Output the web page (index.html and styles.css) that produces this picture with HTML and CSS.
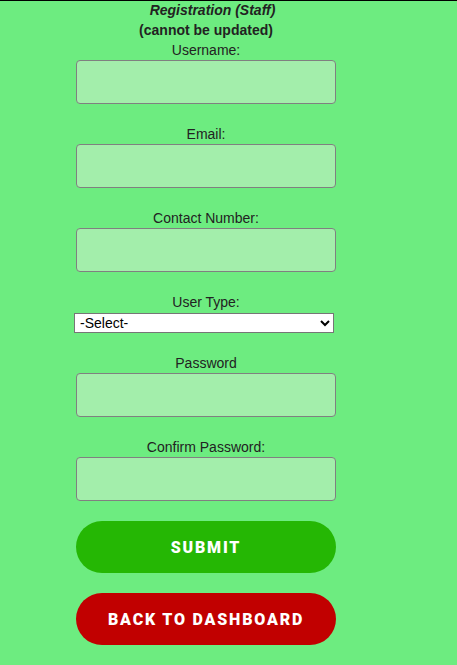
FILE: index.html
```html
<!DOCTYPE html>
<html>
<head>
<meta charset="utf-8">
<link rel="stylesheet" href="styles.css">
</head>
<body>
<div class="page">
  <form class="form">
    <div class="title">Registration (Staff)</div>
    <div class="subtitle">(cannot be updated)</div>
    <label class="label">Username:</label>
    <input class="field" type="text">
    <label class="label">Email:</label>
    <input class="field" type="text">
    <label class="label">Contact Number:</label>
    <input class="field" type="text">
    <label class="label">User Type:</label>
    <select class="select"><option>-Select-</option></select>
    <label class="label">Password</label>
    <input class="field" type="password">
    <label class="label">Confirm Password:</label>
    <input class="field" type="password">
    <button type="button" class="btn btn-submit">SUBMIT</button>
    <button type="button" class="btn btn-back">BACK TO DASHBOARD</button>
  </form>
</div>
</body>
</html>
```
FILE: styles.css
```css
html, body {
  margin: 0;
  padding: 0;
  background: #6dec80;
}
body {
  border-top: 1px solid #000;
  font-family: "Liberation Sans", Arial, sans-serif;
  font-size: 14px;
  color: #222;
  height: 664px;
  overflow: hidden;
}
.page {
  width: 412px;
}
.form {
  display: flex;
  flex-direction: column;
  align-items: center;
  text-align: center;
}
.title {
  font-weight: bold;
  font-style: italic;
  line-height: 19px;
  height: 19px;
  padding-left: 13px;
}
.subtitle {
  font-weight: bold;
  line-height: 20px;
}
.label {
  display: block;
  line-height: 20px;
}
.field {
  box-sizing: border-box;
  width: 260px;
  height: 44px;
  margin: 0 0 20px 0;
  background: #a3eeab;
  border: 1px solid #808080;
  border-radius: 4px;
}
.select {
  box-sizing: border-box;
  align-self: flex-start;
  margin: 1px 0 20px 74px;
  width: 260px;
  height: 20px;
  font-family: "Liberation Sans", Arial, sans-serif;
  font-size: 14px;
  color: #000;
  background: #fff;
  border: 1px solid #767676;
  border-radius: 0;
  padding: 0 0 0 1px;
}
.btn {
  box-sizing: border-box;
  width: 260px;
  height: 52px;
  border: none;
  border-radius: 26px;
  color: #fff;
  font-family: Roboto, "Liberation Sans", sans-serif;
  font-weight: 900;
  font-size: 16px;
  letter-spacing: 1.8px;
  margin-bottom: 20px;
  padding: 0;
}
.btn-submit {
  background: #25b704;
}
.btn-back {
  background: #c10000;
}
```
